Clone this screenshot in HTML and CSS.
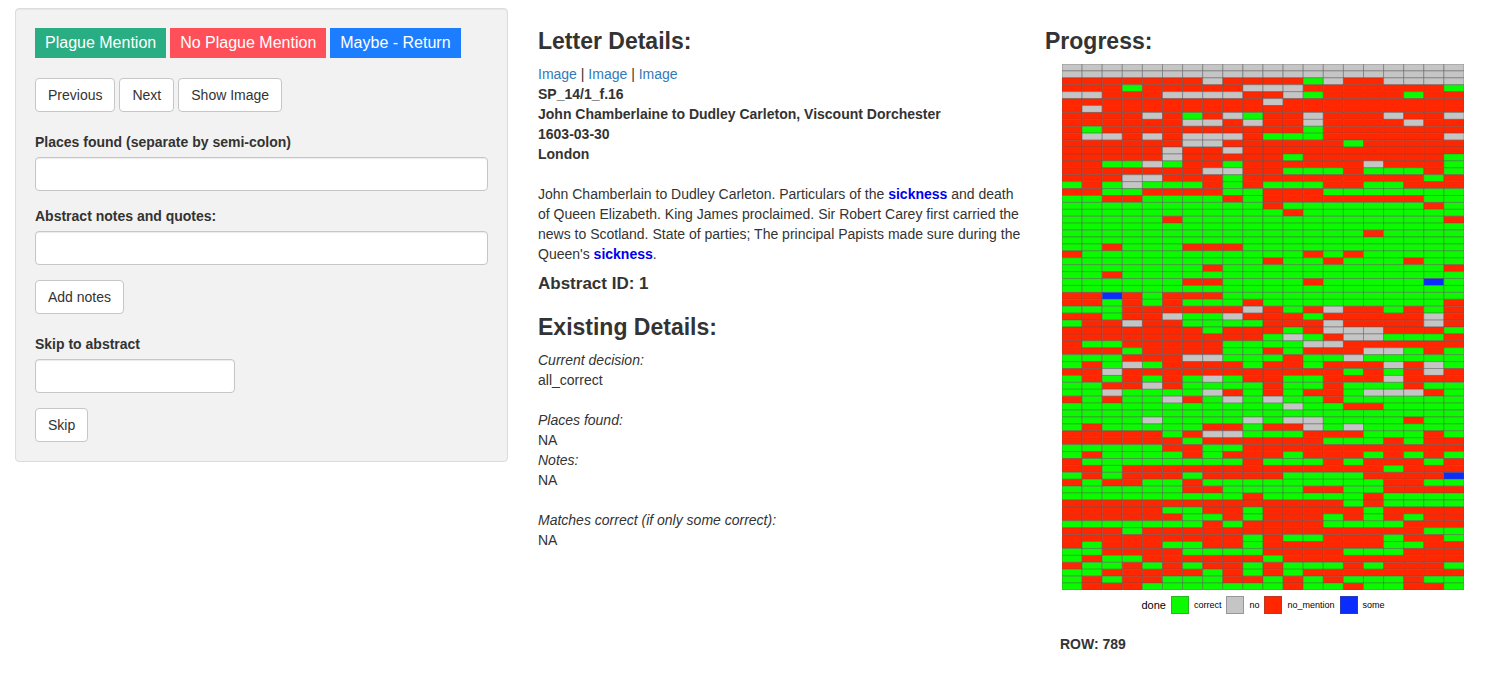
FILE: index.html
```
<!DOCTYPE html>
<html lang="en">
<head>
<meta charset="utf-8">
<meta name="viewport" content="width=device-width, initial-scale=1">
<title>Letter Details</title>
<link rel="stylesheet" href="styles.css">
</head>
<body>
<div class="page">
  <div class="sidebar">
  <form class="well">
    <div class="button-row">
      <button type="button" class="decision decision-yes">Plague Mention</button>
      <button type="button" class="decision decision-no">No Plague Mention</button>
      <button type="button" class="decision decision-maybe">Maybe - Return</button>
    </div>
    <div class="button-row">
      <button type="button" class="btn">Previous</button>
      <button type="button" class="btn">Next</button>
      <button type="button" class="btn">Show Image</button>
    </div>
    <div class="group">
      <div class="field">
        <label for="places">Places found (separate by semi-colon)</label>
        <input type="text" id="places">
      </div>
      <div class="field">
        <label for="notes">Abstract notes and quotes:</label>
        <input type="text" id="notes">
      </div>
      <button type="button" class="btn">Add notes</button>
    </div>
    <div class="group">
      <div class="field field-short">
        <label for="skip">Skip to abstract</label>
        <input type="text" id="skip">
      </div>
      <button type="button" class="btn">Skip</button>
    </div>
  </form>
  </div>

  <main class="details">
    <h3>Letter Details:</h3>
    <div><a href="#">Image</a> | <a href="#">Image</a> | <a href="#">Image</a></div>
    <div class="meta">
      <div>SP_14/1_f.16</div>
      <div>John Chamberlaine to Dudley Carleton, Viscount Dorchester</div>
      <div>1603-03-30</div>
      <div>London</div>
    </div>
    <p class="abstract">John Chamberlain to Dudley Carleton. Particulars of the <b class="hit">sickness</b> and death of Queen Elizabeth. King James proclaimed. Sir Robert Carey first carried the news to Scotland. State of parties; The principal Papists made sure during the Queen's <b class="hit">sickness</b>.</p>
    <h4>Abstract ID: 1</h4>
    <h3>Existing Details:</h3>
    <dl class="existing">
      <dt>Current decision:</dt>
      <dd class="gap-after">all_correct</dd>
      <dt>Places found:</dt>
      <dd>NA</dd>
      <dt>Notes:</dt>
      <dd class="gap-after">NA</dd>
      <dt>Matches correct (if only some correct):</dt>
      <dd>NA</dd>
    </dl>
  </main>

  <section class="progress">
    <h3>Progress:</h3>
    <div class="plot">
      <div class="chart">
        <svg id="heatmap" class="heatmap" viewBox="0 0 402 526" role="img" aria-label="Progress"></svg>
        <div class="legend">
          <span class="legend-title">done</span>
          <span class="key"><i class="swatch correct"></i>correct</span>
          <span class="key"><i class="swatch no"></i>no</span>
          <span class="key"><i class="swatch no-mention"></i>no_mention</span>
          <span class="key"><i class="swatch some"></i>some</span>
        </div>
      </div>
      <div class="row-count">ROW: 789</div>
    </div>
  </section>
</div>
<script src="heatmap.js"></script>
</body>
</html>
```
FILE: styles.css
```
* {
  box-sizing: border-box;
}

body {
  margin: 0;
  background: #fff;
  color: #333;
  font-family: "Helvetica Neue", Helvetica, "Liberation Sans", Arial, sans-serif;
  font-size: 14px;
  line-height: 20px;
}

.page {
  display: grid;
  grid-template-columns: 508fr 522fr 443fr;
  align-items: start;
  padding: 8px 15px 20px;
}

.page > * {
  min-width: 0;
}

.sidebar {
  padding-right: 15px;
}

.details {
  padding: 0 20px 0 15px;
}

h3,
h4 {
  margin: 20px 0 10px;
  font-weight: 700;
}

h3 {
  font-size: 23px;
  line-height: 26px;
}

h4 {
  margin-top: 10px;
  font-size: 17px;
  line-height: 20px;
}

a {
  color: #337ab7;
  text-decoration: none;
}

.well {
  display: flex;
  flex-direction: column;
  gap: 20px;
  padding: 19px;
  border: 1px solid #dcdcdc;
  border-radius: 4px;
  background: #f2f2f2;
  box-shadow: inset 0 1px 1px rgba(0, 0, 0, 0.05);
}

.button-row {
  display: flex;
  flex-wrap: wrap;
  gap: 4px;
}

button,
input {
  margin: 0;
  font: inherit;
  color: inherit;
}

.decision {
  height: 30px;
  padding: 0 10px;
  border: 0;
  color: #fff;
  font-size: 16px;
}

.decision-yes {
  background: #28ae82;
}

.decision-no {
  background: #ff505a;
}

.decision-maybe {
  background: #1c7eff;
}

.btn {
  height: 34px;
  padding: 0 12px;
  border: 1px solid #c6c6c6;
  border-radius: 4px;
  background: #fff;
}

.group {
  display: flex;
  flex-direction: column;
  align-items: flex-start;
  gap: 15px;
}

.field {
  display: flex;
  flex-direction: column;
  gap: 5px;
  width: 100%;
}

.field-short {
  max-width: 200px;
}

label {
  font-weight: 700;
}

input {
  width: 100%;
  height: 34px;
  padding: 6px 12px;
  border: 1px solid #c6c6c6;
  border-radius: 4px;
  background: #fff;
  box-shadow: inset 0 1px 1px rgba(0, 0, 0, 0.08);
}

.meta {
  font-weight: 700;
}

.abstract {
  margin: 20px 0 10px;
}

.hit {
  color: #0000ee;
}

.existing {
  margin: 0;
}

.existing dt {
  font-style: italic;
}

.existing dd {
  margin: 0;
}

.existing .gap-after {
  margin-bottom: 20px;
}

.plot {
  padding: 0 24px 0 15px;
}

.chart {
  padding-left: 2px;
}

.heatmap {
  display: block;
  width: 100%;
}

.cell {
  stroke: #555;
  stroke-opacity: 0.45;
  stroke-width: 1;
}

.correct {
  fill: #0cfa00;
  background: #0cfa00;
}

.no {
  fill: #c5c5c5;
  background: #c5c5c5;
}

.no-mention {
  fill: #ff2600;
  background: #ff2600;
}

.some {
  fill: #0a2cff;
  background: #0a2cff;
}

.legend {
  display: flex;
  justify-content: center;
  align-items: center;
  gap: 5px;
  margin-top: 6px;
  color: #000;
  font-size: 9px;
  line-height: 18px;
}

.legend-title {
  font-size: 11px;
}

.key {
  display: flex;
  align-items: center;
  gap: 5px;
}

.swatch {
  width: 18px;
  height: 18px;
  border: 1px solid rgba(85, 85, 85, 0.4);
}

.row-count {
  margin-top: 20px;
  font-weight: 700;
}
```
FILE: heatmap.js
```
// One string per row of letters: g = correct, x = no, r = no_mention, b = some.
const rows = `
xxxxxxxxxx xxxxxxxxxx
xxxxxxxxxx xxxxxxxxxx
rrrrrrrxrr rrgxrrxxxx
rrrgrrrrrx xxrrrrrrrg
xxrrrxxxxr rxgrrrrgrr
rrrrrrrrrr xrrrrrrrrr
rxrrrrrrrr rrrrrrrrrr
rrrrxrgrxg rrxrrrxrrx
rrrrrrxxrx rrxrrrrxrr
rgrrrrrrrr rrgrrrrrrr
rxxrxrxxxr gggrrrrrrx
rrrrrrxxrr rrrrgrrrrr
rrrrrxrrxr rrrrrrrrrr
rrrrrxrrrr rgrrrrrrrg
rrggxgrrgr rrrrrxrrrg
rrrrrrrxxr rgggrgggrg
rrrxxrrrgr rrrrrrrrgr
grgxgggrgr gggrrggrrr
rrggrrrrgg rrrggggggg
ggrrggggrg rrrrrrrrgg
gggggggggg rgggggggrg
gggggggggg grgggggggg
gggggrgggg gggggggggr
gggggggggg gggggggggg
gggggggggg gggggrgggg
gggggggggg gggggggggg
ggrgggrrrg gggggggggg
rggggggggg ggrgrggggg
gggggggggg rggrgggrgg
gggggggrgg gggggggggr
ggrggggggg gggggggggg
ggggggrrgg ggrgggggbg
gggggggggg gggggggggg
rrbrgrrrgg gggggggggg
rrgrgrgggr gggggggggr
gggrrrrrrx rgrxrrgrgr
rrgrrxggxr rrgrrrrrxr
grrxrrgggg rrrxrrrrxr
rrrrrrrgrr rgrxxxrrrg
rrrrrrrrrr gxgrxxgggr
rggrrrrrgg ggxxrrrrrr
rrrgrrrrgg rgrrrxxgrg
gggrrrxxgg grggxggggg
grgxgrrrrg rrgrrrxrxg
rrxrrrrrrr rrrrgrgrxr
grgrgrgxgr rggrrrxrrr
ggrrxrgggg rggrgggrgg
ggxggggxrg rgrrgxxxrg
rgrggxrgxg xggrgggggg
gggggggggg gxggrrgggg
gggggggggg gggggggggg
ggggxggggx gxxggggrgg
grgggggrrg rrxgxggggg
rrrrrgrxxg ggrrrgggrg
rrrrrrgrrr rrrgggrgrr
gggggrrggr rrrrrrrrrr
grggggrgrr rgrrrgrgrg
rggggggggr gggrgrrrgr
rrgrrrrrrr rrrrrrgrrr
grgrrrgrrr rggggrrrrb
rgrrggrggg ggggggrrgg
ggggggrrgg ggrrggrrrr
gggggggggr gggggrgggg
rrrrrrrrrr rrrrgrgggg
rrrrrggrrg rrrrrgrrrr
rrrrrrggrg rrrgrgrgrr
gggggggrgr rrrggggrrr
rrrgrrrrrr rrrrrrrrgg
rrrrrrrrrg rggrrrgrrg
rgrrrggrrg rrrrrrggrr
ggrrrrgggg rrrrgggrrr
grggrrrrrr grrrrrrrrr
rggrgrgrrg rgggrgrrrg
ggrrrrrgrg rgrrrrrrrr
grgrrgggrr grgrgggrgg
grrrgggggg grggrggrrg
`.trim().split("\n").map((line) => line.replace(" ", ""));

const classes = { g: "correct", x: "no", r: "no-mention", b: "some" };
const svg = document.getElementById("heatmap");
const width = 402 / 20;
const height = 526 / rows.length;

rows.forEach((row, y) => {
  [...row].forEach((code, x) => {
    const cell = document.createElementNS("http://www.w3.org/2000/svg", "rect");
    cell.setAttribute("x", x * width);
    cell.setAttribute("y", y * height);
    cell.setAttribute("width", width);
    cell.setAttribute("height", height);
    cell.setAttribute("class", "cell " + classes[code]);
    svg.append(cell);
  });
});
```
